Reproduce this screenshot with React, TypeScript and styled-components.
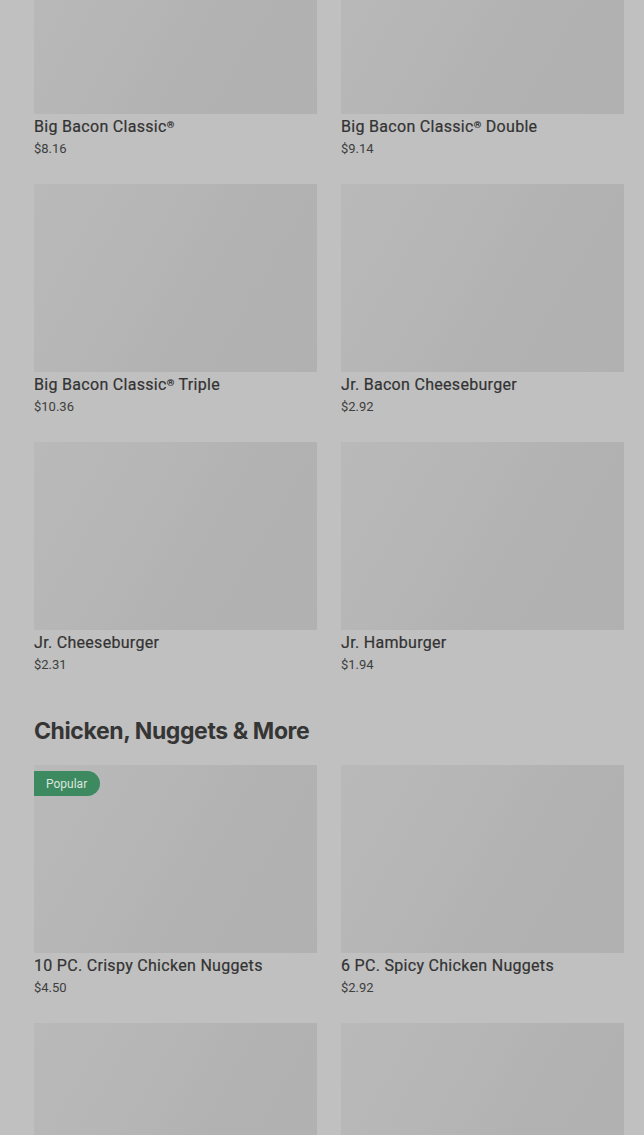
import React from "react";
import styled, { createGlobalStyle } from "styled-components";

const GlobalStyle = createGlobalStyle`
  html, body {
    margin: 0;
    padding: 0;
    background: #c0c0c0;
    overflow: hidden;
  }
  body {
    font-family: Roboto, "Noto Sans", sans-serif;
    color: #3a3a3a;
  }
`;

const Page = styled.div`
  height: 1135px;
  overflow: hidden;
  padding: 0 20px 0 34px;
`;

const Menu = styled.div`
  margin-top: -74px;
`;

const Section = styled.section`
  & + & {
    margin-top: 41px;
  }
`;

const Heading = styled.h2`
  margin: 0 0 18px;
  font-family: Inter, "Noto Sans", sans-serif;
  font-size: 23px;
  line-height: 32px;
  font-weight: 700;
  letter-spacing: -0.4px;
  color: #353535;
`;

const Grid = styled.div`
  display: grid;
  grid-template-columns: 283px 283px;
  column-gap: 24px;
  row-gap: 26px;
`;

const Card = styled.div`
  display: flex;
  flex-direction: column;
`;

const Thumb = styled.div`
  position: relative;
  height: 188px;
  background: linear-gradient(
    120deg,
    #b9b9b9 0%,
    #b6b6b6 35%,
    #b2b2b2 60%,
    #b1b1b1 100%
  );
`;

const Badge = styled.span`
  position: absolute;
  top: 6px;
  left: 0;
  height: 25px;
  padding: 0 13px 0 12px;
  display: flex;
  align-items: center;
  background: #3d8a61;
  color: #dbe6df;
  font-size: 12px;
  border-radius: 0 13px 13px 0;
`;

const Title = styled.div`
  margin-top: 3px;
  font-size: 16px;
  line-height: 20px;
  font-weight: 400;
  letter-spacing: 0.3px;
  color: #333333;
  -webkit-text-stroke: 0.2px #333333;
`;

const Price = styled.div`
  margin-top: 3px;
  font-size: 13px;
  line-height: 18px;
  color: #3e3e3e;
`;

type Item = { name: string; price: string; popular?: boolean };

const sections: { title?: string; items: Item[] }[] = [
  {
    items: [
      { name: "Big Bacon Classic®", price: "$8.16" },
      { name: "Big Bacon Classic® Double", price: "$9.14" },
      { name: "Big Bacon Classic® Triple", price: "$10.36" },
      { name: "Jr. Bacon Cheeseburger", price: "$2.92" },
      { name: "Jr. Cheeseburger", price: "$2.31" },
      { name: "Jr. Hamburger", price: "$1.94" },
    ],
  },
  {
    title: "Chicken, Nuggets & More",
    items: [
      { name: "10 PC. Crispy Chicken Nuggets", price: "$4.50", popular: true },
      { name: "6 PC. Spicy Chicken Nuggets", price: "$2.92" },
      { name: "4 PC. Crispy Chicken Nuggets", price: "$2.29" },
      { name: "4 PC. Spicy Chicken Nuggets", price: "$2.29" },
    ],
  },
];

const Sup = styled.sup`
  font-size: 0.6em;
  vertical-align: 0.45em;
  line-height: 0;
`;

function renderName(name: string) {
  const parts = name.split("®");
  return parts.map((p, i) => (
    <React.Fragment key={i}>
      {p}
      {i < parts.length - 1 && <Sup>®</Sup>}
    </React.Fragment>
  ));
}

export default function App() {
  return (
    <>
      <GlobalStyle />
      <Page>
        <Menu>
          {sections.map((s, si) => (
            <Section key={si}>
              {s.title && <Heading>{s.title}</Heading>}
              <Grid>
                {s.items.map((it) => (
                  <Card key={it.name}>
                    <Thumb>{it.popular && <Badge>Popular</Badge>}</Thumb>
                    <Title>{renderName(it.name)}</Title>
                    <Price>{it.price}</Price>
                  </Card>
                ))}
              </Grid>
            </Section>
          ))}
        </Menu>
      </Page>
    </>
  );
}
